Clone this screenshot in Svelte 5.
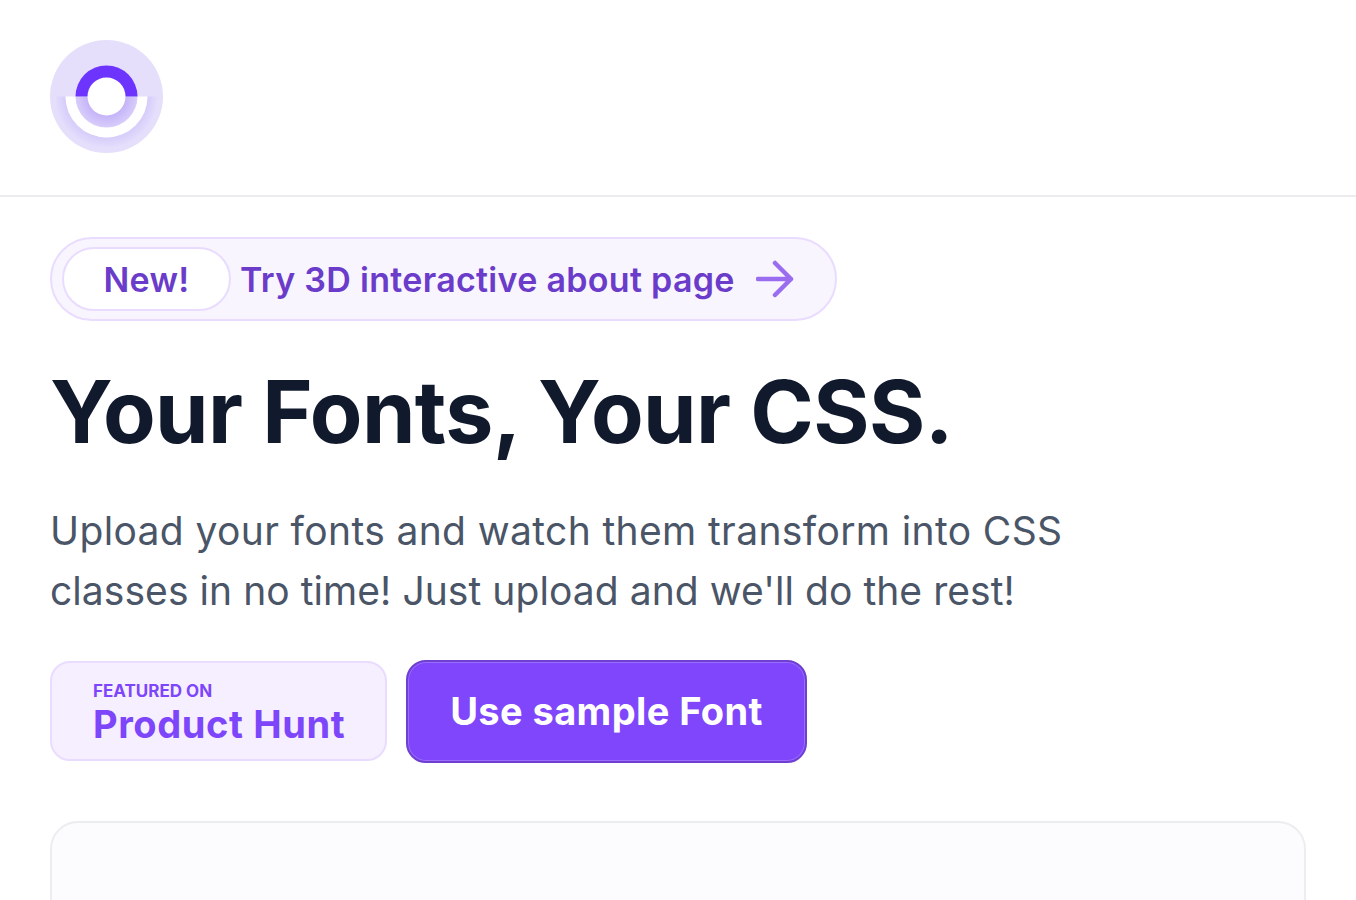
<script>
  const leadLines = [
    "Upload your fonts and watch them transform into CSS",
    "classes in no time! Just upload and we'll do the rest!"
  ];
</script>

<header class="top">
  <svg class="logo" width="113" height="113" viewBox="0 0 113 113" role="img" aria-label="Logo">
    <defs>
      <radialGradient id="glow" gradientUnits="userSpaceOnUse" cx="56.5" cy="56.5" r="52">
        <stop offset="0.78" stop-color="#d6ccfa" />
        <stop offset="1" stop-color="#e5dffc" />
      </radialGradient>
      <radialGradient id="inner" gradientUnits="userSpaceOnUse" cx="56.5" cy="56.5" r="31">
        <stop offset="0.6" stop-color="#c4b3f8" />
        <stop offset="1" stop-color="#d8cdfb" />
      </radialGradient>
    </defs>
    <circle cx="56.5" cy="56.5" r="56.5" fill="#e5dffc" />
    <path d="M15.5 56.5a41 41 0 0 0 82 0h10a51 51 0 0 1-102 0z" fill="url(#glow)" />
    <path d="M15.5 56.5h82a41 41 0 0 1-82 0z" fill="#fff" />
    <path d="M25.5 56.5h62a31 31 0 0 1-62 0z" fill="url(#inner)" />
    <path d="M25.5 56.5a31 31 0 0 1 62 0z" fill="#6d34fe" />
    <circle cx="56.5" cy="56.5" r="19" fill="#fff" />
  </svg>
</header>

<main class="hero">
  <a class="announce" href="#about">
    <span class="tag">New!</span>
    <span class="announce-text">Try 3D interactive about page</span>
    <svg class="arrow" width="38" height="38" viewBox="0 0 38 38" fill="none" stroke="#9a6cf0" stroke-width="4.5" stroke-linecap="round" stroke-linejoin="round">
      <path d="M2 19h33M19 3l16 16-16 16" />
    </svg>
  </a>

  <h1>Your Fonts, Your CSS.</h1>
  <p class="lead">
    {#each leadLines as line}
      <span>{line}</span>
    {/each}
  </p>

  <div class="actions">
    <a class="hunt" href="#hunt">
      <span class="hunt-small">FEATURED ON</span>
      <span class="hunt-big">Product Hunt</span>
    </a>
    <button class="sample">Use sample Font</button>
  </div>

  <section class="dropzone"></section>
</main>

<style>
  :global(body) {
    background: #fff;
    font-family: "Inter", "Liberation Sans", sans-serif;
    overflow: hidden;
    height: 900px;
  }

  .top {
    padding: 40px 50px 42px;
    border-bottom: 2px solid #ececef;
    display: flex;
  }

  .logo {
    display: block;
  }

  .hero {
    padding: 40px 50px 0;
  }

  .announce {
    width: 787px;
    height: 84px;
    box-sizing: border-box;
    display: flex;
    align-items: center;
    padding: 0 41px 0 10px;
    border: 2px solid #e9dcff;
    border-radius: 42px;
    background: #f8f5ff;
    color: #6a3cc9;
    text-decoration: none;
    font-size: 34px;
    font-weight: 600;
    letter-spacing: 0.3px;
  }

  .tag {
    width: 169px;
    height: 64px;
    box-sizing: border-box;
    display: flex;
    align-items: center;
    justify-content: center;
    background: #fff;
    border: 2px solid #e9dcff;
    border-radius: 32px;
    margin-right: 9px;
  }

  .announce-text {
    flex: 1;
    white-space: nowrap;
  }

  .arrow {
    display: block;
  }

  h1 {
    margin: 41px 0 0;
    font-size: 86px;
    line-height: 100px;
    font-weight: 700;
    color: #111a2c;
    white-space: nowrap;
    letter-spacing: -0.57px;
  }

  .lead {
    margin: 39px 0 0;
    font-size: 39px;
    line-height: 60px;
    color: #4a5567;
    letter-spacing: 0.37px;
  }

  .lead span {
    display: block;
    white-space: nowrap;
  }

  .lead span:last-child {
    letter-spacing: 0.06px;
  }

  .actions {
    margin-top: 39px;
    display: flex;
    gap: 19px;
    align-items: flex-start;
  }

  .hunt {
    margin-top: 1px;
    width: 337px;
    height: 100px;
    box-sizing: border-box;
    display: flex;
    flex-direction: column;
    justify-content: center;
    padding: 5px 0 0 41px;
    background: #f6efff;
    border: 2px solid #e9dcff;
    border-radius: 20px;
    color: #7e46fa;
    text-decoration: none;
    font-weight: 700;
  }

  .hunt-small {
    font-size: 17px;
    line-height: 20px;
  }

  .hunt-big {
    font-size: 38px;
    line-height: 46px;
    letter-spacing: 0.6px;
  }

  .sample {
    width: 401px;
    height: 103px;
    box-sizing: border-box;
    padding: 0 0 2px;
    background: #7f46fb;
    border: 2px solid #6f3fd0;
    box-shadow: inset 0 0 0 1px #9a6dff;
    border-radius: 20px;
    color: #fff;
    font: 700 38px "Inter", "Liberation Sans", sans-serif;
    letter-spacing: 0.4px;
  }

  .dropzone {
    margin-top: 58px;
    height: 200px;
    box-sizing: border-box;
    background: #fcfcff;
    border: 2px solid #ecedf1;
    border-radius: 28px;
  }
</style>
